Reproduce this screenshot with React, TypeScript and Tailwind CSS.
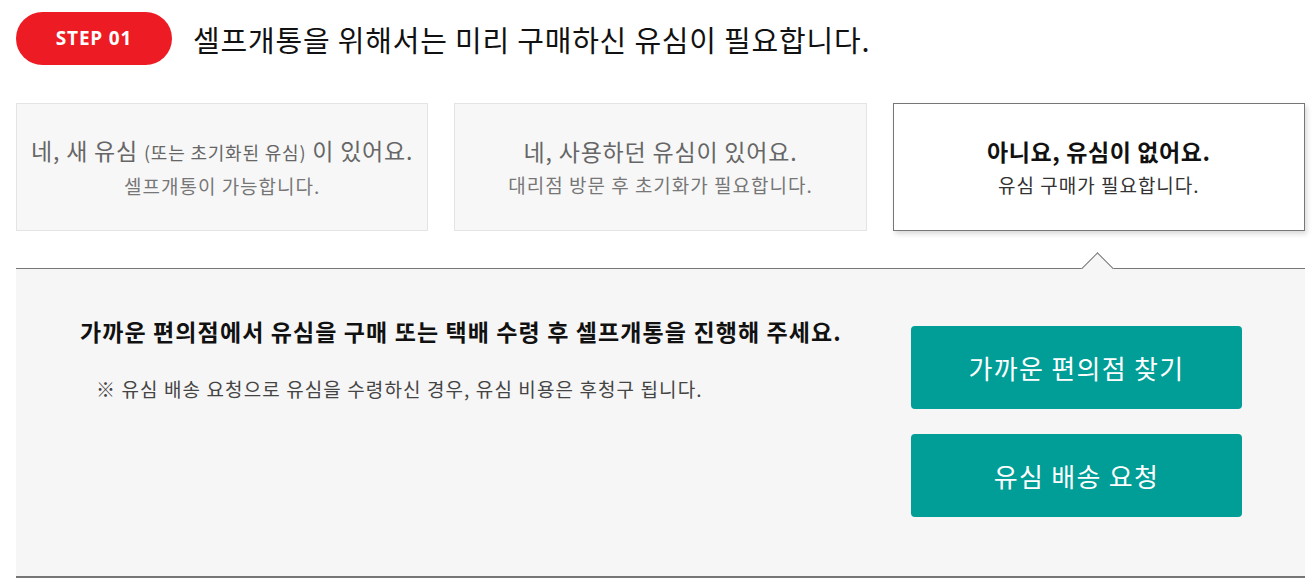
const kr = "font-['Noto_Sans_CJK_KR','Noto_Sans',sans-serif]"

function OptionCard({
  title,
  sub,
  selected,
}: {
  title: React.ReactNode
  sub: string
  selected?: boolean
}) {
  return (
    <div
      className={
        selected
          ? 'flex h-[128px] flex-col items-center justify-center border border-[#777] bg-white shadow-[2px_3px_5px_rgba(0,0,0,0.15)]'
          : 'flex h-[128px] flex-col items-center justify-center border border-[#e4e4e4] bg-[#f7f7f7]'
      }
    >
      <p
        className={
          selected
            ? 'text-[23px] leading-[30px] font-bold tracking-[0.6px] text-[#111]'
            : 'text-[23px] leading-[30px] tracking-[0.8px] text-[#666]'
        }
      >
        {title}
      </p>
      <p
        className={
          selected
            ? 'mt-[6px] text-[19px] leading-[26px] tracking-[1px] text-[#333]'
            : 'mt-[6px] text-[19px] leading-[26px] tracking-[1px] text-[#777]'
        }
      >
        {sub}
      </p>
    </div>
  )
}

export default function App() {
  return (
    <div className={`${kr} bg-white pt-[12px] pr-[10px] pb-[8px] pl-[16px]`}>
      <div className="flex items-center gap-[21px]">
        <span className="flex h-[53px] w-[156px] items-center justify-center rounded-full bg-[#ed1c24] font-['Open_Sans',sans-serif] text-[19px] font-bold tracking-[0.8px] text-white">
          STEP 01
        </span>
        <h1 className="text-[29px] leading-[40px] tracking-[0.8px] text-[#111]">
          셀프개통을 위해서는 미리 구매하신 유심이 필요합니다.
        </h1>
      </div>

      <div className="mt-[38px] grid grid-cols-3 gap-[26px]">
        <OptionCard
          title={
            <>
              네, 새 유심 <span className="text-[18px]">(또는 초기화된 유심)</span> 이 있어요.
            </>
          }
          sub="셀프개통이 가능합니다."
        />
        <OptionCard title="네, 사용하던 유심이 있어요." sub="대리점 방문 후 초기화가 필요합니다." />
        <OptionCard title="아니요, 유심이 없어요." sub="유심 구매가 필요합니다." selected />
      </div>

      <div className="relative mt-[37px] flex justify-between border-t border-b-2 border-t-[#777] border-b-[#767676] bg-[#f6f6f6]">
        <span className="absolute top-[-12px] left-[1070px] h-[23px] w-[23px] rotate-45 border-t border-l border-[#777] bg-[#f6f6f6]" />
        <div className="pt-[47px] pl-[64px]">
          <p className="text-[23px] leading-[30px] font-bold tracking-[1.1px] text-[#111]">
            가까운 편의점에서 유심을 구매 또는 택배 수령 후 셀프개통을 진행해 주세요.
          </p>
          <p className="mt-[28px] pl-[16px] text-[19px] leading-[30px] tracking-[1.1px] text-[#444]">
            ※ 유심 배송 요청으로 유심을 수령하신 경우, 유심 비용은 후청구 됩니다.
          </p>
        </div>
        <div className="flex flex-col gap-[25px] pt-[57px] pr-[63px] pb-[59px]">
          <button className="h-[83px] w-[331px] rounded-[4px] bg-[#009e96] text-[26px] tracking-[1.3px] text-white">
            가까운 편의점 찾기
          </button>
          <button className="h-[83px] w-[331px] rounded-[4px] bg-[#009e96] text-[26px] tracking-[1.3px] text-white">
            유심 배송 요청
          </button>
        </div>
      </div>
    </div>
  )
}
